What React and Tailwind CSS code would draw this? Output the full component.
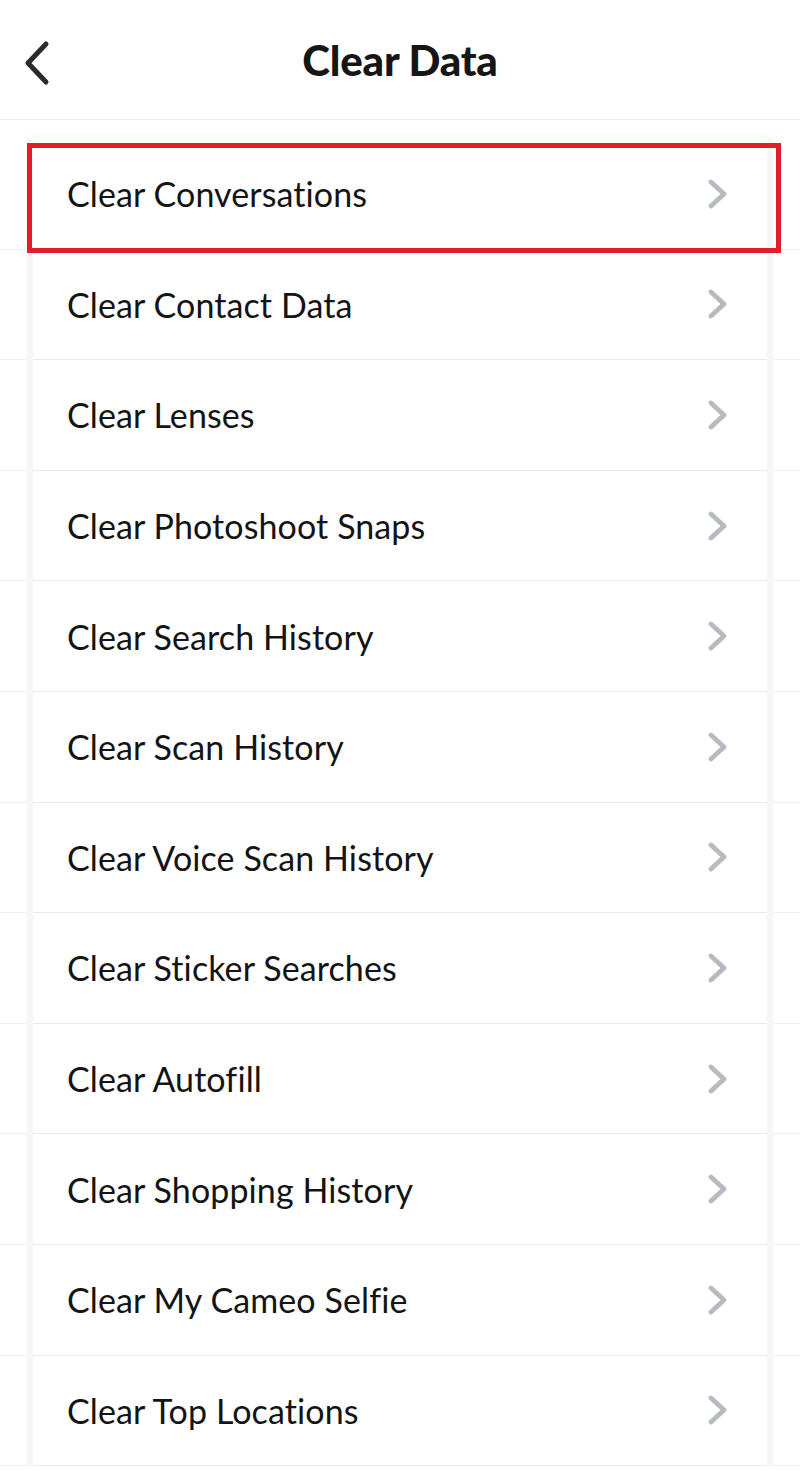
import React from 'react';

const items = [
    'Clear Conversations',
    'Clear Contact Data',
    'Clear Lenses',
    'Clear Photoshoot Snaps',
    'Clear Search History',
    'Clear Scan History',
    'Clear Voice Scan History',
    'Clear Sticker Searches',
    'Clear Autofill',
    'Clear Shopping History',
    'Clear My Cameo Selfie',
    'Clear Top Locations',
];

const Chevron = () => (
    <svg width="22" height="30" viewBox="0 0 22 30" fill="none">
        <path d="M4 3 L17 15 L4 27" stroke="#b6bac1" strokeWidth="4.8" strokeLinecap="round" strokeLinejoin="round" />
    </svg>
);

const App = () => {
    return (
        <div className="w-[800px] h-[1470px] overflow-hidden bg-white" style={{ fontFamily: 'Lato, "Open Sans", sans-serif' }}>
            {/* Header */}
            <div className="relative h-[120px] flex items-center justify-center border-b border-[#ededed]">
                <button className="absolute left-[22px] top-[40px] p-0">
                    <svg width="30" height="46" viewBox="0 0 30 46" fill="none">
                        <path d="M24 4 L6 23 L24 42" stroke="#2b2b2b" strokeWidth="5" strokeLinecap="round" strokeLinejoin="round" />
                    </svg>
                </button>
                <h1 className="text-[42px] font-black text-[#161616] tracking-[-0.2px] mt-[2px]">Clear Data</h1>
            </div>

            {/* List */}
            <div className="relative pt-[17px]">
                <div className="mx-[27px] h-[2px] shadow-[0_-2px_6px_rgba(0,0,0,0.05)]"></div>
                {items.map((label) => (
                    <div key={label} className="border-b border-[#f0f0f0]">
                        <div className="mx-[27px] border-x-[6px] border-[#f6f6f6] bg-white">
                            <div className="h-[110.6px] flex items-center justify-between pl-[34px] pr-[38px] border-b border-[#e9e9e9] -mb-px">
                                <span className="text-[34px] text-[#141414] tracking-[0.1px]">{label}</span>
                                <Chevron />
                            </div>
                        </div>
                    </div>
                ))}
                {/* Highlight box */}
                <div className="absolute left-[27px] top-[23px] w-[754px] h-[110px] border-[5px] border-[#e31e2a] pointer-events-none"></div>
            </div>
        </div>
    );
};

export default App;
